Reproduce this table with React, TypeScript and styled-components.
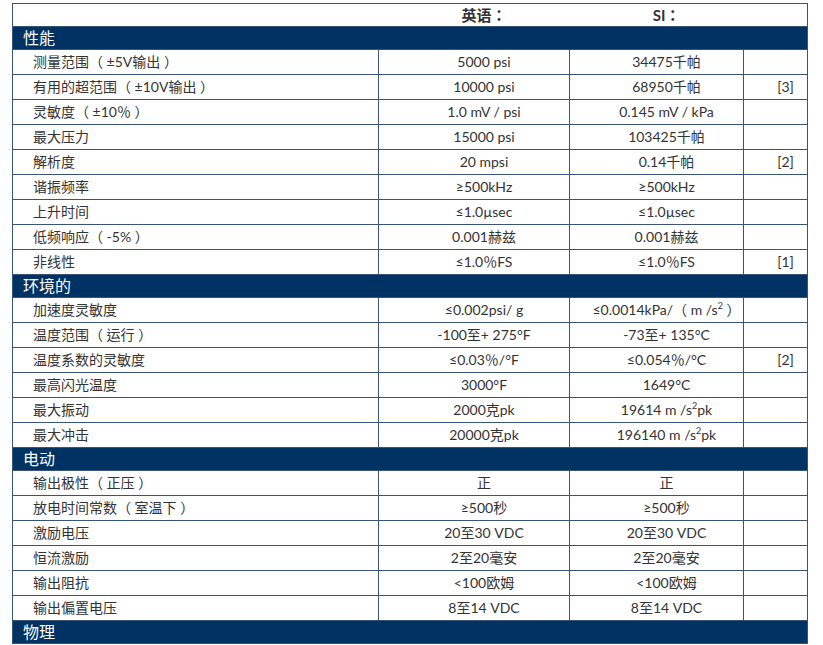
import * as React from "react";
import styled, { createGlobalStyle } from "styled-components";

type Row = {
  label: string;
  en: React.ReactNode;
  si: React.ReactNode;
  note?: string;
};

type Section = {
  title: string;
  rows: Row[];
};

const Sq = () => <Sup>2</Sup>;

const sections: Section[] = [
  {
    title: "性能",
    rows: [
      { label: "测量范围（ ±5V输出 ）", en: "5000 psi", si: "34475千帕" },
      { label: "有用的超范围（ ±10V输出 ）", en: "10000 psi", si: "68950千帕", note: "[3]" },
      { label: "灵敏度（ ±10％ ）", en: "1.0 mV / psi", si: "0.145 mV / kPa" },
      { label: "最大压力", en: "15000 psi", si: "103425千帕" },
      { label: "解析度", en: "20 mpsi", si: "0.14千帕", note: "[2]" },
      { label: "谐振频率", en: "≥500kHz", si: "≥500kHz" },
      { label: "上升时间", en: "≤1.0µsec", si: "≤1.0µsec" },
      { label: "低频响应（ -5% ）", en: "0.001赫兹", si: "0.001赫兹" },
      { label: "非线性", en: "≤1.0％FS", si: "≤1.0％FS", note: "[1]" },
    ],
  },
  {
    title: "环境的",
    rows: [
      {
        label: "加速度灵敏度",
        en: "≤0.002psi/ g",
        si: (
          <>
            ≤0.0014kPa/（ m /s<Sq /> ）
          </>
        ),
      },
      { label: "温度范围（ 运行 ）", en: "-100至+ 275°F", si: "-73至+ 135°C" },
      { label: "温度系数的灵敏度", en: "≤0.03％/°F", si: "≤0.054％/°C", note: "[2]" },
      { label: "最高闪光温度", en: "3000°F", si: "1649°C" },
      {
        label: "最大振动",
        en: "2000克pk",
        si: (
          <>
            19614 m /s<Sq />pk
          </>
        ),
      },
      {
        label: "最大冲击",
        en: "20000克pk",
        si: (
          <>
            196140 m /s<Sq />pk
          </>
        ),
      },
    ],
  },
  {
    title: "电动",
    rows: [
      { label: "输出极性（ 正压 ）", en: "正", si: "正" },
      { label: "放电时间常数（ 室温下 ）", en: "≥500秒", si: "≥500秒" },
      { label: "激励电压", en: "20至30 VDC", si: "20至30 VDC" },
      { label: "恒流激励", en: "2至20毫安", si: "2至20毫安" },
      { label: "输出阻抗", en: "<100欧姆", si: "<100欧姆" },
      { label: "输出偏置电压", en: "8至14 VDC", si: "8至14 VDC" },
    ],
  },
  { title: "物理", rows: [] },
];

const GlobalStyle = createGlobalStyle`
  html, body {
    margin: 0;
    padding: 0;
    background: #ffffff;
  }
  body {
    font-family: Lato, "Noto Sans CJK TC", sans-serif;
    color: #333333;
  }
`;

const Page = styled.div`
  padding: 3px 0 0 12px;
`;

const Table = styled.table`
  width: 795px;
  table-layout: fixed;
  border-collapse: collapse;
  border: 1px solid #3a5478;
`;

const HeadCell = styled.th`
  height: 22px;
  padding: 0 0 0 20px;
  font-size: 15px;
  font-weight: 700;
  line-height: 22px;
  color: #333333;
  text-align: center;
  border-bottom: 1px solid #3a5478;
`;

const SectionCell = styled.td`
  height: 22px;
  padding: 0 10px;
  background: #003263;
  color: #ffffff;
  font-size: 16px;
  line-height: 22px;
  text-align: left;
  border: 1px solid #3a5478;
`;

const Cell = styled.td<{ $align?: "left" | "center" }>`
  height: 24px;
  padding: 0 0 0 20px;
  font-size: 14px;
  line-height: 24px;
  white-space: nowrap;
  text-align: ${(p) => p.$align ?? "center"};
  border: 1px solid #3a5478;
`;

const Sup = styled.sup`
  font-size: 9px;
  line-height: 0;
  vertical-align: 6px;
`;

export default function App() {
  return (
    <Page>
      <GlobalStyle />
      <Table>
        <colgroup>
          <col style={{ width: 366 }} />
          <col style={{ width: 191 }} />
          <col style={{ width: 174 }} />
          <col style={{ width: 64 }} />
        </colgroup>
        <thead>
          <tr>
            <HeadCell />
            <HeadCell>英语：</HeadCell>
            <HeadCell>SI：</HeadCell>
            <HeadCell />
          </tr>
        </thead>
        <tbody>
          {sections.map((section) => (
            <React.Fragment key={section.title}>
              <tr>
                <SectionCell colSpan={4}>{section.title}</SectionCell>
              </tr>
              {section.rows.map((row) => (
                <tr key={row.label}>
                  <Cell $align="left">{row.label}</Cell>
                  <Cell>{row.en}</Cell>
                  <Cell>{row.si}</Cell>
                  <Cell>{row.note}</Cell>
                </tr>
              ))}
            </React.Fragment>
          ))}
        </tbody>
      </Table>
    </Page>
  );
}
